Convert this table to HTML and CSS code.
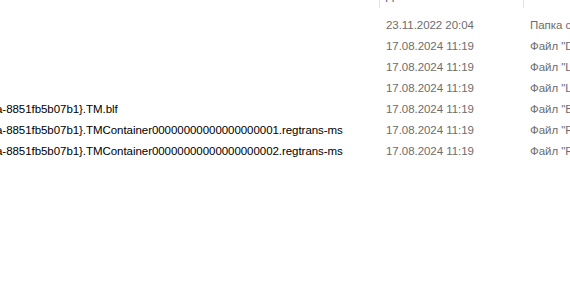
FILE: index.html
```html
<!DOCTYPE html>
<html lang="ru">
<head>
<meta charset="utf-8">
<link rel="stylesheet" href="styles.css">
</head>
<body>
<div class="view">
  <div class="header">
    <div class="col name"></div>
    <div class="col date">Дата изменения</div>
    <div class="col type">Тип</div>
  </div>
  <div class="rows">
    <div class="row"><div class="col name"></div><div class="col date">23.11.2022 20:04</div><div class="col type">Папка с файлами</div></div>
    <div class="row"><div class="col name"></div><div class="col date">17.08.2024 11:19</div><div class="col type">Файл "DAT"</div></div>
    <div class="row"><div class="col name"></div><div class="col date">17.08.2024 11:19</div><div class="col type">Файл "LOG1"</div></div>
    <div class="row"><div class="col name"></div><div class="col date">17.08.2024 11:19</div><div class="col type">Файл "LOG2"</div></div>
    <div class="row"><div class="col name"><span class="fn">a-8851fb5b07b1}.TM.blf</span></div><div class="col date">17.08.2024 11:19</div><div class="col type">Файл "BLF"</div></div>
    <div class="row"><div class="col name"><span class="fn">a-8851fb5b07b1}.TMContainer00000000000000000001.regtrans-ms</span></div><div class="col date">17.08.2024 11:19</div><div class="col type">Файл "REGTRANS-MS"</div></div>
    <div class="row"><div class="col name"><span class="fn">a-8851fb5b07b1}.TMContainer00000000000000000002.regtrans-ms</span></div><div class="col date">17.08.2024 11:19</div><div class="col type">Файл "REGTRANS-MS"</div></div>
  </div>
</div>
</body>
</html>
```
FILE: styles.css
```css
html, body {
  margin: 0;
  padding: 0;
  background: #ffffff;
}
body {
  font-family: "Liberation Sans", Arial, sans-serif;
  font-size: 11.5px;
  letter-spacing: -0.05px;
  color: #000;
  width: 570px;
  height: 295px;
  overflow: hidden;
}
.view {
  width: 570px;
  overflow: hidden;
}
.header {
  display: flex;
  height: 24px;
  margin-top: -16px;
  line-height: 24px;
  color: #4c607a;
}
.header .col {
  border-right: 1px solid #e5e5e5;
}
.rows {
  padding-top: 7px;
}
.row {
  display: flex;
  height: 21px;
  line-height: 21px;
}
.col {
  flex: none;
  white-space: nowrap;
  overflow: hidden;
  box-sizing: border-box;
}
.name {
  width: 380px;
}
.date {
  width: 144px;
  padding-left: 6px;
  color: #6d6d6d;
}
.type {
  width: 200px;
  padding-left: 6px;
  color: #6d6d6d;
}
.header .date, .header .type {
  color: #4c607a;
}
.fn {
  display: block;
  margin-left: -4px;
}
```
